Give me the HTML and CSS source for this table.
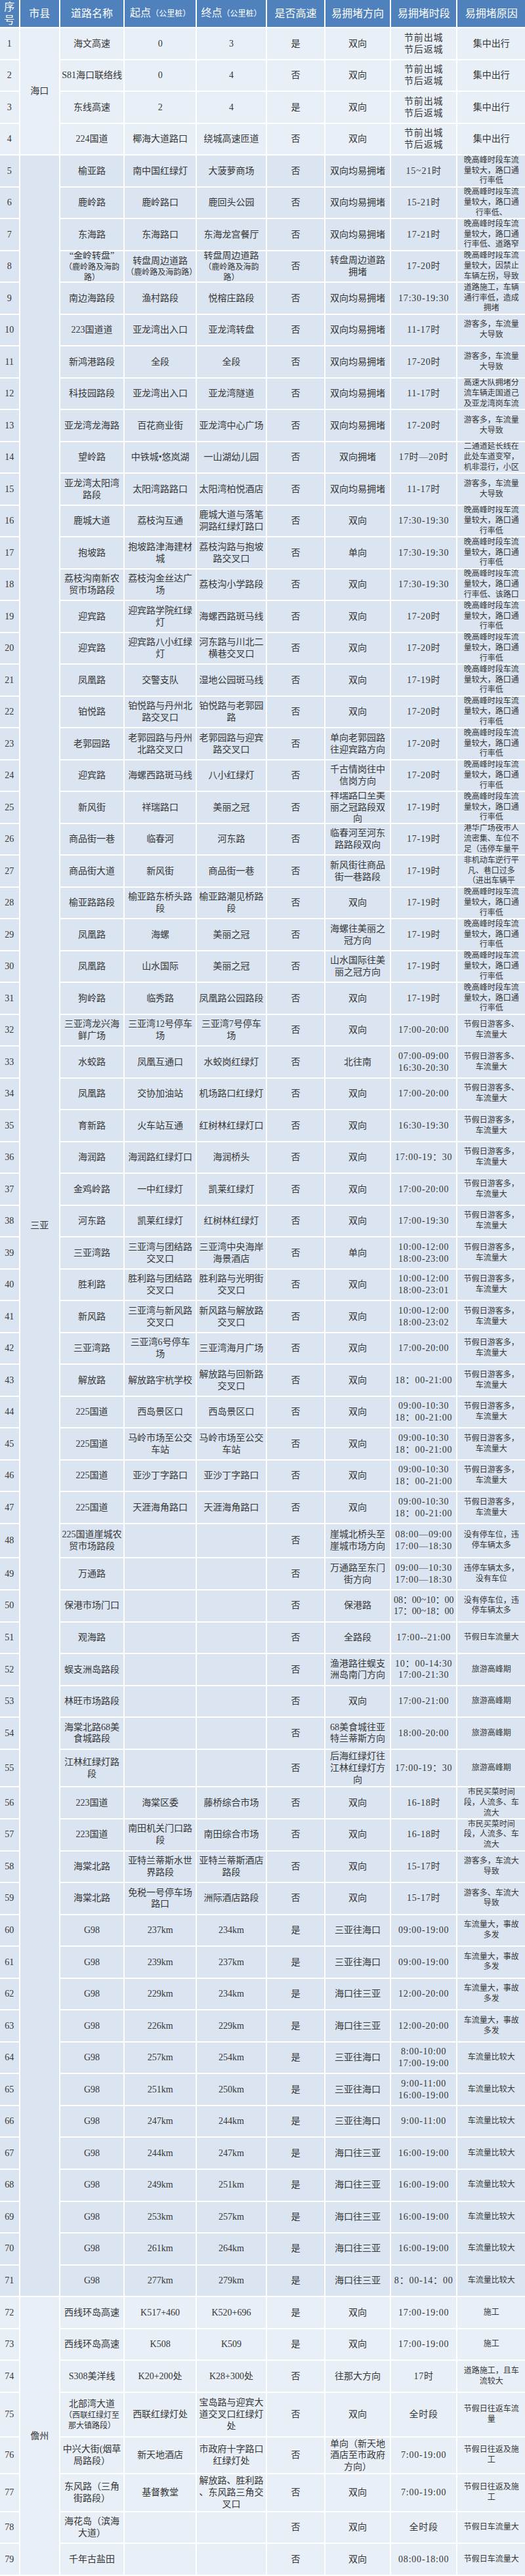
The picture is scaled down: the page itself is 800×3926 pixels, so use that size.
FILE: index.html
```html
<!DOCTYPE html>
<html lang="zh-CN">
<head>
<meta charset="utf-8">
<title>易拥堵路段</title>
<link rel="stylesheet" href="styles.css">
</head>
<body>
<div class="sheet">
<div class="r h"><div>序号</div><div>市县</div><div>道路名称</div><div><span>起点<small>（公里桩）</small></span></div><div><span>终点<small>（公里桩）</small></span></div><div>是否高速</div><div>易拥堵方向</div><div>易拥堵时段</div><div>易拥堵原因</div></div>

<div class="r"><div>1</div><div class="s4">海口</div><div>海文高速</div><div>0</div><div>3</div><div>是</div><div>双向</div><div><span>节前出城<br>节后返城</span></div><div class="big">集中出行</div></div>
<div class="r"><div>2</div><div>S81海口联络线</div><div>0</div><div>4</div><div>否</div><div>双向</div><div><span>节前出城<br>节后返城</span></div><div class="big">集中出行</div></div>
<div class="r"><div>3</div><div>东线高速</div><div>2</div><div>4</div><div>是</div><div>双向</div><div><span>节前出城<br>节后返城</span></div><div class="big">集中出行</div></div>
<div class="r"><div>4</div><div>224国道</div><div>椰海大道路口</div><div>绕城高速匝道</div><div>否</div><div>双向</div><div><span>节前出城<br>节后返城</span></div><div class="big">集中出行</div></div>

<div class="r d"><div>5</div><div class="s67">三亚</div><div>榆亚路</div><div>南中国红绿灯</div><div>大菠萝商场</div><div>否</div><div>双向均易拥堵</div><div>15~21时</div><div>晚高峰时段车流量较大，路口通行率低</div></div>
<div class="r d"><div>6</div><div>鹿岭路</div><div>鹿岭路口</div><div>鹿回头公园</div><div>否</div><div>双向均易拥堵</div><div>15-21时</div><div>晚高峰时段车流量较大，路口通行率低、</div></div>
<div class="r d"><div>7</div><div>东海路</div><div>东海路口</div><div>东海龙宫餐厅</div><div>否</div><div>双向均易拥堵</div><div>17-21时</div><div>晚高峰时段车流量较大，路口通行率低、道路窄</div></div>
<div class="r d"><div>8</div><div><span>“金岭转盘”<span class="sm">（鹿岭路及海韵路）</span></span></div><div><span>转盘周边道路<span class="sm">（鹿岭路及海韵路）</span></span></div><div><span>转盘周边道路<span class="sm">（鹿岭路及海韵路）</span></span></div><div>否</div><div>转盘周边道路拥堵</div><div>17-20时</div><div>晚高峰时段车流量较大，因禁止车辆左拐，导致</div></div>
<div class="r d"><div>9</div><div>南边海路段</div><div>渔村路段</div><div>悦榕庄路段</div><div>否</div><div>双向均易拥堵</div><div>17:30-19:30</div><div>道路施工，车辆通行率低，造成拥堵</div></div>
<div class="r d"><div>10</div><div>223国道道</div><div>亚龙湾出入口</div><div>亚龙湾转盘</div><div>否</div><div>双向均易拥堵</div><div>11-17时</div><div>游客多，车流量大导致</div></div>
<div class="r d"><div>11</div><div>新鸿港路段</div><div>全段</div><div>全段</div><div>否</div><div>双向均易拥堵</div><div>17-20时</div><div>游客多，车流量大导致</div></div>
<div class="r d"><div>12</div><div>科技园路段</div><div>亚龙湾出入口</div><div>亚龙湾隧道</div><div>否</div><div>双向均易拥堵</div><div>11-17时</div><div>高速大队拥堵分流车辆走国道己及亚龙湾岗车流</div></div>
<div class="r d"><div>13</div><div>亚龙湾龙海路</div><div>百花商业街</div><div>亚龙湾中心广场</div><div>否</div><div>双向均易拥堵</div><div>17-20时</div><div>游客多，车流量大导致</div></div>
<div class="r d"><div>14</div><div>望岭路</div><div>中铁城•悠岚湖</div><div>一山湖幼儿园</div><div>否</div><div>双向拥堵</div><div>17时—20时</div><div>二通道延长线在此处车道变窄，机非混行，小区</div></div>
<div class="r d"><div>15</div><div>亚龙湾太阳湾路段</div><div>太阳湾路路口</div><div>太阳湾柏悦酒店</div><div>否</div><div>双向均易拥堵</div><div>11-17时</div><div>游客多，车流量大导致</div></div>
<div class="r d"><div>16</div><div>鹿城大道</div><div>荔枝沟互通</div><div>鹿城大道与落笔洞路红绿灯路口</div><div>否</div><div>双向</div><div>17:30-19:30</div><div>晚高峰时段车流量较大，路口通行率低</div></div>
<div class="r d"><div>17</div><div>抱坡路</div><div>抱坡路津海建材城</div><div>荔枝沟路与抱坡路交叉口</div><div>否</div><div>单向</div><div>17:30-19:30</div><div>晚高峰时段车流量较大，路口通行率低</div></div>
<div class="r d"><div>18</div><div>荔枝沟南新农贸市场路段</div><div>荔枝沟金丝达广场</div><div>荔枝沟小学路段</div><div>否</div><div>双向</div><div>17:30-19:30</div><div>晚高峰时段车流量较大，路口通行率低、该路口</div></div>
<div class="r d"><div>19</div><div>迎宾路</div><div>迎宾路学院红绿灯</div><div>海螺西路斑马线</div><div>否</div><div>双向</div><div>17-20时</div><div>晚高峰时段车流量较大，路口通行率低</div></div>
<div class="r d"><div>20</div><div>迎宾路</div><div>迎宾路八小红绿灯</div><div>河东路与川北二横巷交叉口</div><div>否</div><div>双向</div><div>17-20时</div><div>晚高峰时段车流量较大，路口通行率低</div></div>
<div class="r d"><div>21</div><div>凤凰路</div><div>交警支队</div><div>湿地公园斑马线</div><div>否</div><div>双向</div><div>17-19时</div><div>晚高峰时段车流量较大，路口通行率低</div></div>
<div class="r d"><div>22</div><div>铂悦路</div><div>铂悦路与丹州北路交叉口</div><div>铂悦路与老郭园路</div><div>否</div><div>双向</div><div>17-20时</div><div>晚高峰时段车流量较大，路口通行率低</div></div>
<div class="r d"><div>23</div><div>老郭园路</div><div>老郭园路与丹州北路交叉口</div><div>老郭园路与迎宾路交叉口</div><div>否</div><div>单向老郭园路往迎宾路方向</div><div>17-20时</div><div>晚高峰时段车流量较大，路口通行率低</div></div>
<div class="r d"><div>24</div><div>迎宾路</div><div>海螺西路斑马线</div><div>八小红绿灯</div><div>否</div><div>千古情岗往中信岗方向</div><div>17-20时</div><div>晚高峰时段车流量较大，路口通行率低</div></div>
<div class="r d"><div>25</div><div>新风街</div><div>祥瑞路口</div><div>美丽之冠</div><div>否</div><div>祥瑞路口至美丽之冠路段双向</div><div>17-19时</div><div>晚高峰时段车流量较大，路口通行率低</div></div>
<div class="r d"><div>26</div><div>商品街一巷</div><div>临春河</div><div>河东路</div><div>否</div><div>临春河至河东路路段双向</div><div>17-19时</div><div>港华广场夜市人流密集、车位不足（违停车量平</div></div>
<div class="r d"><div>27</div><div>商品街大道</div><div>新风街</div><div>商品街一巷</div><div>否</div><div>新风街往商品街一巷路段</div><div>17-19时</div><div>非机动车逆行平凡、巷口过多（进出车辆平</div></div>
<div class="r d"><div>28</div><div>榆亚路路段</div><div>榆亚路东桥头路段</div><div>榆亚路潮见桥路段</div><div>否</div><div>双向</div><div>17-19时</div><div>晚高峰时段车流量较大，路口通行率低</div></div>
<div class="r d"><div>29</div><div>凤凰路</div><div>海螺</div><div>美丽之冠</div><div>否</div><div>海螺往美丽之冠方向</div><div>17-19时</div><div>晚高峰时段车流量较大，路口通行率低</div></div>
<div class="r d"><div>30</div><div>凤凰路</div><div>山水国际</div><div>美丽之冠</div><div>否</div><div>山水国际往美丽之冠方向</div><div>17-19时</div><div>晚高峰时段车流量较大，路口通行率低</div></div>
<div class="r d"><div>31</div><div>狗岭路</div><div>临秀路</div><div>凤凰路公园路段</div><div>否</div><div>双向</div><div>17-19时</div><div>晚高峰时段车流量较大，路口通行率低</div></div>
<div class="r d"><div>32</div><div>三亚湾龙兴海鲜广场</div><div>三亚湾12号停车场</div><div>三亚湾7号停车场</div><div>否</div><div>双向</div><div>17:00-20:00</div><div>节假日游客多、车流量大</div></div>
<div class="r d"><div>33</div><div>水蛟路</div><div>凤凰互通口</div><div>水蛟岗红绿灯</div><div>否</div><div>北往南</div><div><span>07:00-09:00<br>16:30-20:30</span></div><div>节假日游客多、车流量大</div></div>
<div class="r d"><div>34</div><div>凤凰路</div><div>交协加油站</div><div>机场路口红绿灯</div><div>否</div><div>双向</div><div>17:00-20:00</div><div>节假日游客多、车流量大</div></div>
<div class="r d"><div>35</div><div>育新路</div><div>火车站互通</div><div>红树林红绿灯口</div><div>否</div><div>双向</div><div>16:30-19:30</div><div>节假日游客多，车流量大</div></div>
<div class="r d"><div>36</div><div>海润路</div><div>海润路红绿灯口</div><div>海润桥头</div><div>否</div><div>双向</div><div>17:00-19：30</div><div>节假日游客多，车流量大</div></div>
<div class="r d"><div>37</div><div>金鸡岭路</div><div>一中红绿灯</div><div>凯莱红绿灯</div><div>否</div><div>双向</div><div>17:00-20:00</div><div>节假日游客多，车流量大</div></div>
<div class="r d"><div>38</div><div>河东路</div><div>凯莱红绿灯</div><div>红树林红绿灯</div><div>否</div><div>双向</div><div>17:00-19:30</div><div>节假日游客多，车流量大</div></div>
<div class="r d"><div>39</div><div>三亚湾路</div><div>三亚湾与团结路交叉口</div><div>三亚湾中央海岸海景酒店</div><div>否</div><div>单向</div><div><span>10:00-12:00<br>18:00-23:00</span></div><div>节假日游客多，车流量大</div></div>
<div class="r d"><div>40</div><div>胜利路</div><div>胜利路与团结路交叉口</div><div>胜利路与光明街交叉口</div><div>否</div><div>双向</div><div><span>10:00-12:00<br>18:00-23:01</span></div><div>节假日游客多，车流量大</div></div>
<div class="r d"><div>41</div><div>新风路</div><div>三亚湾与新风路交叉口</div><div>新风路与解放路交叉口</div><div>否</div><div>双向</div><div><span>10:00-12:00<br>18:00-23:02</span></div><div>节假日游客多，车流量大</div></div>
<div class="r d"><div>42</div><div>三亚湾路</div><div>三亚湾6号停车场</div><div>三亚湾海月广场</div><div>否</div><div>双向</div><div>17:00-20:00</div><div>节假日游客多，车流量大</div></div>
<div class="r d"><div>43</div><div>解放路</div><div>解放路宇杭学校</div><div>解放路与回新路交叉口</div><div>否</div><div>双向</div><div>18：00-21:00</div><div>节假日游客多，车流量大</div></div>
<div class="r d"><div>44</div><div>225国道</div><div>西岛景区口</div><div>西岛景区口</div><div>否</div><div>双向</div><div><span>09:00-10:30<br>18：00-21:00</span></div><div>节假日游客多，车流量大</div></div>
<div class="r d"><div>45</div><div>225国道</div><div>马岭市场至公交车站</div><div>马岭市场至公交车站</div><div>否</div><div>双向</div><div><span>09:00-10:30<br>18：00-21:00</span></div><div>节假日游客多，车流量大</div></div>
<div class="r d"><div>46</div><div>225国道</div><div>亚沙丁字路口</div><div>亚沙丁字路口</div><div>否</div><div>双向</div><div><span>09:00-10:30<br>18：00-21:00</span></div><div>节假日游客多，车流量大</div></div>
<div class="r d"><div>47</div><div>225国道</div><div>天涯海角路口</div><div>天涯海角路口</div><div>否</div><div>双向</div><div><span>09:00-10:30<br>18：00-21:00</span></div><div>节假日游客多，车流量大</div></div>
<div class="r d"><div>48</div><div>225国道崖城农贸市场路段</div><div></div><div></div><div>否</div><div>崖城北桥头至崖城市场方向</div><div><span>08:00—09:00<br>17:00—18:30</span></div><div>没有停车位，违停车辆太多</div></div>
<div class="r d"><div>49</div><div>万通路</div><div></div><div></div><div>否</div><div>万通路至东门街方向</div><div><span>09:00—10:30<br>17:00—18:30</span></div><div>违停车辆太多，没有车位</div></div>
<div class="r d"><div>50</div><div>保港市场门口</div><div></div><div></div><div>否</div><div>保港路</div><div class="tight"><span>08：00~10：00<br>17：00~18：00</span></div><div>没有停车位，违停车辆太多</div></div>
<div class="r d"><div>51</div><div>观海路</div><div></div><div></div><div>否</div><div>全路段</div><div>17:00--21:00</div><div>节假日车流量大</div></div>
<div class="r d"><div>52</div><div>蜈支洲岛路段</div><div></div><div></div><div>否</div><div>渔港路往蜈支洲岛南门方向</div><div><span>10：00-14:30<br>17:00-21:30</span></div><div>旅游高峰期</div></div>
<div class="r d"><div>53</div><div>林旺市场路段</div><div></div><div></div><div>否</div><div>双向</div><div>17:00-21:00</div><div>旅游高峰期</div></div>
<div class="r d"><div>54</div><div>海棠北路68美食城路段</div><div></div><div></div><div>否</div><div>68美食城往亚特兰蒂斯方向</div><div>18:00-20:00</div><div>旅游高峰期</div></div>
<div class="r d"><div>55</div><div>江林红绿灯路段</div><div></div><div></div><div>否</div><div>后海红绿灯往江林红绿灯方向</div><div>17:00-19：30</div><div>旅游高峰期</div></div>
<div class="r d"><div>56</div><div>223国道</div><div>海棠区委</div><div>藤桥综合市场</div><div>否</div><div>双向</div><div>16-18时</div><div>市民买菜时间段，人流多、车流大</div></div>
<div class="r d"><div>57</div><div>223国道</div><div>南田机关门口路段</div><div>南田综合市场</div><div>否</div><div>双向</div><div>16-18时</div><div>市民买菜时间段，人流多、车流大</div></div>
<div class="r d"><div>58</div><div>海棠北路</div><div>亚特兰蒂斯水世界路段</div><div>亚特兰蒂斯酒店路段</div><div>否</div><div>双向</div><div>15-17时</div><div>游客多，车流大导致</div></div>
<div class="r d"><div>59</div><div>海棠北路</div><div>免税一号停车场路口</div><div>洲际酒店路段</div><div>否</div><div>双向</div><div>15-17时</div><div>游客多、车流大导致</div></div>
<div class="r d"><div>60</div><div>G98</div><div>237km</div><div>234km</div><div>是</div><div>三亚往海口</div><div>09:00-19:00</div><div>车流量大，事故多发</div></div>
<div class="r d"><div>61</div><div>G98</div><div>239km</div><div>237km</div><div>是</div><div>三亚往海口</div><div>09:00-19:00</div><div>车流量大，事故多发</div></div>
<div class="r d"><div>62</div><div>G98</div><div>229km</div><div>234km</div><div>是</div><div>海口往三亚</div><div>12:00-20:00</div><div>车流量大，事故多发</div></div>
<div class="r d"><div>63</div><div>G98</div><div>226km</div><div>229km</div><div>是</div><div>海口往三亚</div><div>12:00-20:00</div><div>车流量大，事故多发</div></div>
<div class="r d"><div>64</div><div>G98</div><div>257km</div><div>254km</div><div>是</div><div>三亚往海口</div><div><span>8:00-10:00<br>17:00-19:00</span></div><div>车流量比较大</div></div>
<div class="r d"><div>65</div><div>G98</div><div>251km</div><div>250km</div><div>是</div><div>三亚往海口</div><div><span>9:00-11:00<br>16:00-19:00</span></div><div>车流量比较大</div></div>
<div class="r d"><div>66</div><div>G98</div><div>247km</div><div>244km</div><div>是</div><div>三亚往海口</div><div>9:00-11:00</div><div>车流量比较大</div></div>
<div class="r d"><div>67</div><div>G98</div><div>244km</div><div>247km</div><div>是</div><div>海口往三亚</div><div>16:00-19:00</div><div>车流量比较大</div></div>
<div class="r d"><div>68</div><div>G98</div><div>249km</div><div>251km</div><div>是</div><div>海口往三亚</div><div>16:00-19:00</div><div>车流量比较大</div></div>
<div class="r d"><div>69</div><div>G98</div><div>253km</div><div>257km</div><div>是</div><div>海口往三亚</div><div>16:00-19:00</div><div>车流量比较大</div></div>
<div class="r d"><div>70</div><div>G98</div><div>261km</div><div>264km</div><div>是</div><div>海口往三亚</div><div>16:00-19:00</div><div>车流量比较大</div></div>
<div class="r d"><div>71</div><div>G98</div><div>277km</div><div>279km</div><div>是</div><div>海口往三亚</div><div>8：00-14：00</div><div>车流量比较大</div></div>

<div class="r"><div>72</div><div class="s8">儋州</div><div>西线环岛高速</div><div>K517+460</div><div>K520+696</div><div>是</div><div>双向</div><div>17:00-19:00</div><div>施工</div></div>
<div class="r"><div>73</div><div>西线环岛高速</div><div>K508</div><div>K509</div><div>是</div><div>双向</div><div>17:00-19:00</div><div>施工</div></div>
<div class="r"><div>74</div><div>S308美洋线</div><div>K20+200处</div><div>K28+300处</div><div>否</div><div>往那大方向</div><div>17时</div><div>道路施工，且车流较大</div></div>
<div class="r"><div>75</div><div><span>北部湾大道<span class="sm">（西联红绿灯至那大镇路段）</span></span></div><div>西联红绿灯处</div><div>宝岛路与迎宾大道交叉口红绿灯处</div><div>否</div><div>双向</div><div>全时段</div><div>节假日往返车流量</div></div>
<div class="r"><div>76</div><div>中兴大街(烟草局路段）</div><div>新天地酒店</div><div>市政府十字路口红绿灯处</div><div>否</div><div>单向（新天地酒店至市政府方向）</div><div>7:00-19:00</div><div>节假日往返及施工</div></div>
<div class="r"><div>77</div><div>东风路（三角街路段）</div><div>基督教堂</div><div class="any">解放路、胜利路、东风路三角交叉口</div><div>否</div><div>双向</div><div>7:00-19:00</div><div>节假日往返及施工</div></div>
<div class="r"><div>78</div><div>海花岛（滨海大道）</div><div></div><div></div><div>否</div><div>双向</div><div>全时段</div><div>节假日车流量大</div></div>
<div class="r"><div>79</div><div>千年古盐田</div><div></div><div></div><div>否</div><div>双向</div><div>08:00-18:00</div><div>节假日车流量大</div></div>
</div>
</body>
</html>
```

FILE: styles.css
```css
* { box-sizing: border-box; }
html, body { margin: 0; padding: 0; background: #fff; }
body {
  font-family: "Liberation Serif", "Noto Sans CJK SC", serif;
  color: #363636;
}
.sheet {
  width: 800px;
  display: grid;
  grid-template-columns: 28.6px 59.2px 96.5px 107.7px 105px 87px 98px 99.4px 102.6px;
  grid-template-rows: 41.3px repeat(47, 46.51px) 50.7px repeat(6, 46.55px) 55.7px repeat(19, 46.56px) 66.5px 53.8px 55.8px 46.5px 46.2px;
  gap: 2px;
  background: #fff;
}
.r { display: contents; }
.r > div {
  display: flex;
  align-items: center;
  justify-content: center;
  text-align: center;
  overflow: hidden;
  padding: 0 2px;
  font-size: 14px;
  line-height: 17.8px;
  background: #e9eff7;
}
.r.d > div { background: #dbe5f1; }
.r > div:nth-last-child(2) { letter-spacing: 0.8px; white-space: nowrap; }
.r > div:last-child { font-size: 12px; line-height: 15.8px; padding: 0 5px; }
.r > div.big { font-size: 14px; line-height: 17.8px; }
.r > div.tight { letter-spacing: 0; }
.r > div.any { line-break: anywhere; }
.r.h > div {
  background: #4f81bd;
  color: #fff;
  font-size: 16px;
  line-height: 20px;
  padding: 0;
  letter-spacing: 0;
}
.h small { font-size: 12px; }
.sm { display: block; font-size: 12px; line-height: 16px; }
.s4 { grid-row: span 4; }
.s67 { grid-row: span 67; }
.s8 { grid-row: span 8; }
```
